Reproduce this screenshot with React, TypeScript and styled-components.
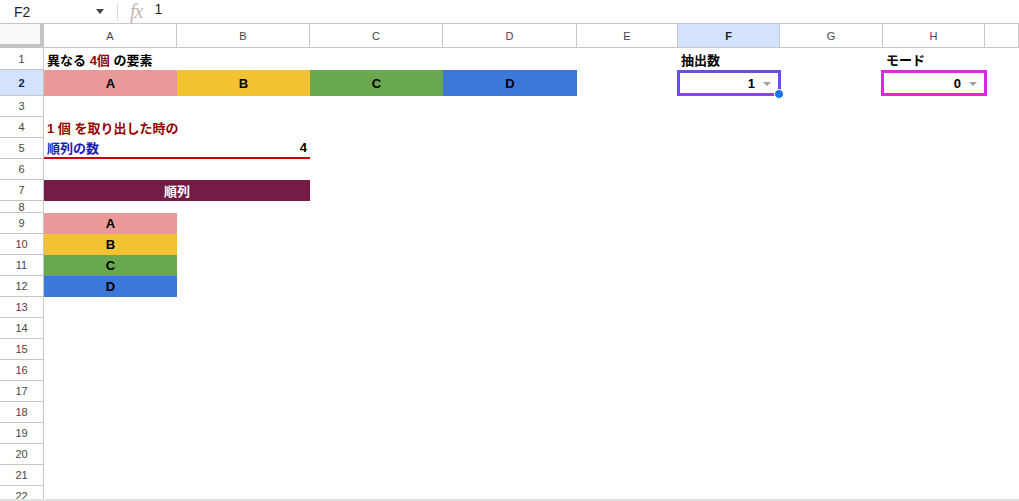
import React from 'react';
import styled, { createGlobalStyle } from 'styled-components';

const GlobalStyle = createGlobalStyle`
   html, body {
      margin: 0;
      padding: 0;
      background: #ffffff;
      overflow: hidden;
   }
   * {
      box-sizing: border-box;
   }
`

const COLS = '44px 133px 133px 133px 134px 101px 102px 103px 102px 1fr';
const FONT = '"Liberation Sans", Arial, "Noto Sans CJK JP", sans-serif';

const Page = styled.div`
   width: 1019px;
   height: 501px;
   display: flex;
   flex-direction: column;
   font-family: ${FONT};
   overflow: hidden;
`

const FormulaBar = styled.div`
   height: 24px;
   flex: none;
   display: flex;
   align-items: center;
   border-bottom: 1px solid #c7c7c7;
   color: #1f1f1f;
`

const NameBox = styled.div`
   width: 117px;
   height: 100%;
   display: flex;
   align-items: center;
   justify-content: space-between;
   padding: 0 13px 0 14px;
   font-size: 14px;
`

const Caret = styled.span`
   width: 0;
   height: 0;
   border-left: 4px solid transparent;
   border-right: 4px solid transparent;
   border-top: 5px solid #444;
`

const Divider = styled.div`
   width: 1px;
   height: 18px;
   background: #dadce0;
`

const Fx = styled.span`
   margin: 0 12px 0 12px;
   font-family: "Liberation Serif", serif;
   font-style: italic;
   font-size: 20px;
   color: #c5b3b3;
   letter-spacing: -1px;
`

const FormulaText = styled.span`
   font-size: 14px;
   margin-top: -6px;
`

const Grid = styled.div`
   flex: 1;
   overflow: hidden;
   display: flex;
   flex-direction: column;
`

const Row = styled.div<{ $h: number }>`
   flex: none;
   display: grid;
   grid-template-columns: ${COLS};
   height: ${p => p.$h}px;
`

const Corner = styled.div`
   background: #f8f9fa;
   border-right: 4px solid #c4c4c4;
   border-bottom: 4px solid #c4c4c4;
`

const ColHead = styled.div<{ $active?: boolean }>`
   display: flex;
   align-items: center;
   justify-content: center;
   font-size: 11px;
   color: ${p => p.$active ? '#1f1f1f' : '#444746'};
   font-weight: ${p => p.$active ? 'bold' : 'normal'};
   background: ${p => p.$active ? '#d3e3fd' : '#ffffff'};
   border-right: 1px solid #c4c7c5;
   border-bottom: 1px solid #c4c7c5;
`

const RowNum = styled.div<{ $active?: boolean }>`
   display: flex;
   align-items: center;
   justify-content: center;
   font-size: 11px;
   color: ${p => p.$active ? '#0b1f4a' : '#444746'};
   font-weight: ${p => p.$active ? 'bold' : 'normal'};
   background: ${p => p.$active ? '#d3e3fd' : '#ffffff'};
   border-right: 1px solid #c4c7c5;
   border-bottom: 1px solid #c4c7c5;
   overflow: hidden;
`

const Cell = styled.div<{
   $bg?: string;
   $color?: string;
   $align?: 'left' | 'center' | 'right';
   $span?: number;
   $col?: number;
   $underline?: string;
}>`
   position: relative;
   grid-column: ${p => p.$col ? `${p.$col} / span ${p.$span ?? 1}` : `span ${p.$span ?? 1}`};
   display: flex;
   align-items: center;
   justify-content: ${p => p.$align === 'center' ? 'center' : p.$align === 'right' ? 'flex-end' : 'flex-start'};
   padding: 0 3px;
   background: ${p => p.$bg ?? 'transparent'};
   color: ${p => p.$color ?? '#000000'};
   font-size: 13px;
   font-weight: bold;
   white-space: nowrap;
   border-bottom: ${p => p.$underline ? `2px solid ${p.$underline}` : 'none'};
`

const Spread = styled.div`
   width: 100%;
   display: flex;
   justify-content: space-between;
   align-items: center;
`

const Red = styled.span`
   color: #990000;
`

const Blue = styled.span`
   color: #1a1ab8;
`

const SelectBox = styled.div<{ $border: string; $bottom: string; $inset: number }>`
   position: absolute;
   top: 0;
   bottom: 0;
   left: -${p => p.$inset}px;
   right: -${p => p.$inset}px;
   display: flex;
   align-items: center;
   justify-content: flex-end;
   gap: 8px;
   padding-right: 7px;
   border: 3px solid ${p => p.$border};
   border-bottom-color: ${p => p.$bottom};
`

const Arrow = styled.span`
   width: 0;
   height: 0;
   border-left: 4px solid transparent;
   border-right: 4px solid transparent;
   border-top: 4px solid #9aa0a6;
   margin-top: 2px;
`

const Handle = styled.span`
   position: absolute;
   right: -6px;
   bottom: -6px;
   width: 10px;
   height: 10px;
   border-radius: 50%;
   background: #1a73e8;
   border: 1px solid #ffffff;
   z-index: 2;
`

const BottomStrip = styled.div`
   height: 2px;
   flex: none;
   background: #e1e1e1;
`

const letters = ['A', 'B', 'C', 'D', 'E', 'F', 'G', 'H', ''];

const items = [
   { label: 'A', bg: '#ea9999' },
   { label: 'B', bg: '#f1c232' },
   { label: 'C', bg: '#6aa84f' },
   { label: 'D', bg: '#3c78d8' },
];

const heights = [22, 26, 21, 21, 21, 21, 21, 12, 21, 21, 21, 21, 21, 21, 21, 21, 21, 21, 21, 21, 21, 21];

const Dropdown = ({ value, border, bottom, inset, handle }: {
   value: string; border: string; bottom: string; inset: number; handle?: boolean;
}) => (
   <SelectBox $border={border} $bottom={bottom} $inset={inset}>
      <span>{value}</span>
      <Arrow />
      {handle && <Handle />}
   </SelectBox>
);

const rowContent = (n: number) => {
   switch (n) {
      case 1:
         return (
            <>
               <Cell $col={2}>異なる&nbsp;<Red>4個</Red>&nbsp;の要素</Cell>
               <Cell $col={7}>抽出数</Cell>
               <Cell $col={9}>モード</Cell>
            </>
         );
      case 2:
         return (
            <>
               {items.map(it => (
                  <Cell key={it.label} $bg={it.bg} $align='center'>{it.label}</Cell>
               ))}
               <Cell $col={7}>
                  <Dropdown value='1' border='#6650dc' bottom='#8e44e0' inset={1} handle />
               </Cell>
               <Cell $col={9}>
                  <Dropdown value='0' border='#e026e0' bottom='#e026e0' inset={2} />
               </Cell>
            </>
         );
      case 4:
         return <Cell $col={2}><Red>1 個 を取り出した時の</Red></Cell>;
      case 5:
         return (
            <Cell $col={2} $span={2} $underline='#cc0000'>
               <Spread>
                  <Blue>順列の数</Blue>
                  <span>4</span>
               </Spread>
            </Cell>
         );
      case 7:
         return <Cell $col={2} $span={2} $bg='#741b47' $color='#ffffff' $align='center'>順列</Cell>;
      case 9:
      case 10:
      case 11:
      case 12: {
         const it = items[n - 9];
         return <Cell $col={2} $bg={it.bg} $align='center'>{it.label}</Cell>;
      }
      default:
         return null;
   }
};

export default function App() {
   return (
      <Page>
         <GlobalStyle />
         <FormulaBar>
            <NameBox>
               <span>F2</span>
               <Caret />
            </NameBox>
            <Divider />
            <Fx>fx</Fx>
            <FormulaText>1</FormulaText>
         </FormulaBar>

         <Grid>
            <Row $h={24}>
               <Corner />
               {letters.map((l, i) => (
                  <ColHead key={i} $active={l === 'F'}>{l}</ColHead>
               ))}
            </Row>

            {heights.map((h, i) => (
               <Row key={i} $h={h}>
                  <RowNum $active={i === 1}>{i + 1}</RowNum>
                  {rowContent(i + 1)}
               </Row>
            ))}
         </Grid>
         <BottomStrip />
      </Page>
   );
}
